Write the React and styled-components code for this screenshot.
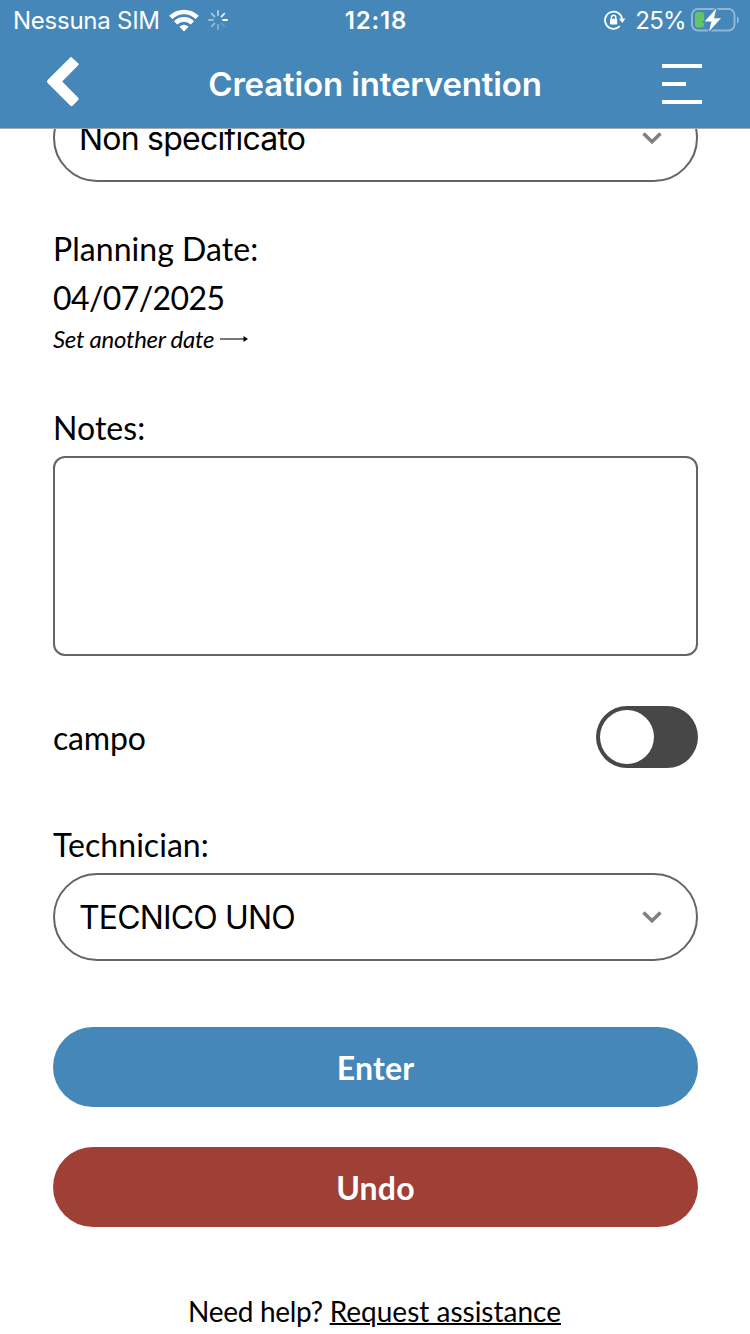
import React, { useState } from "react";
import styled, { createGlobalStyle } from "styled-components";

export default function App() {
  const [checked, setChecked] = useState(false);

  return (
    <Screen>
      <GlobalStyle />
      <StatusBar>
        <StatusLeft>
          <Carrier>Nessuna SIM</Carrier>
          <WifiIcon />
          <SpinnerIcon />
        </StatusLeft>
        <Clock>12:18</Clock>
        <StatusRight>
          <LockIcon />
          <Percent>25%</Percent>
          <BatteryIcon />
        </StatusRight>
      </StatusBar>
      <NavBar>
        <BackButton aria-label="Back">
          <svg width="34" height="52" viewBox="0 0 34 52">
            <path
              d="M25.6 1.2 L32.2 7.2 Q33.4 8.2 32.2 9.3 L16.2 25.5 L32.2 41.7 Q33.4 42.8 32.2 43.9 L26.8 49.6 Q25.6 51 24.2 49.6 L1.6 27 Q0.3 25.5 1.6 24 L24.2 1.4 Q25.2 0.6 25.6 1.2 Z"
              fill="#fff"
            />
          </svg>
        </BackButton>
        <NavTitle>Creation intervention</NavTitle>
        <MenuButton aria-label="Menu">
          <MenuLine $width={40} />
          <MenuLine $width={24} />
          <MenuLine $width={40} />
        </MenuButton>
      </NavBar>
      <Content>
        <Form>
          <SelectBox $scrolled>
            <SelectText $spacing="-0.78px">Non specificato</SelectText>
            <ChevronIcon />
          </SelectBox>
          <DateWrap>
            <Label>Planning Date:</Label>
            <DateText>04/07/2025</DateText>
            <DateLink>
              Set another date
              <ArrowIcon />
            </DateLink>
          </DateWrap>
          <Label>Notes:</Label>
          <NotesArea />
          <SwitchRow>
            <SwitchLabel>campo</SwitchLabel>
            <Switch
              role="switch"
              aria-checked={checked}
              $on={checked}
              onClick={() => setChecked(!checked)}
            >
              <Knob />
            </Switch>
          </SwitchRow>
          <Label>Technician:</Label>
          <SelectBox>
            <SelectText $spacing="-0.85px">TECNICO UNO</SelectText>
            <ChevronIcon />
          </SelectBox>
          <ButtonWrap>
            <Button $color="#4587b9">Enter</Button>
            <Button $color="#9f4037">Undo</Button>
          </ButtonWrap>
          <HelpText>
            Need help? <HelpLink href="#">Request assistance</HelpLink>
          </HelpText>
        </Form>
      </Content>
    </Screen>
  );
}

function WifiIcon() {
  return (
    <svg width="30" height="23" viewBox="0 0 30 23">
      <g fill="none" stroke="#fff" strokeWidth="4.6">
        <path d="M1.8 8.4 A18.8 18.8 0 0 1 28.2 8.4" />
        <path d="M6.6 13.8 A12 12 0 0 1 23.4 13.8" />
      </g>
      <path d="M15 22.4 L10.4 17.8 Q15 13.8 19.6 17.8 Z" fill="#fff" />
    </svg>
  );
}

function SpinnerIcon() {
  const opacities = [0.6, 0.85, 1, 0.15, 0.35, 0.4, 0.45, 0.5];
  return (
    <svg width="20" height="20" viewBox="-10 -10 20 20">
      {opacities.map((opacity, i) => (
        <path
          key={i}
          d="M0 -5 V-9"
          stroke="#fff"
          strokeWidth="1.9"
          strokeLinecap="round"
          opacity={opacity}
          transform={`rotate(${i * 45})`}
        />
      ))}
    </svg>
  );
}

function LockIcon() {
  return (
    <svg width="22" height="20" viewBox="0 0 22 20">
      <path
        d="M15.8 16.2 A8.6 8.6 0 1 1 18.1 9"
        fill="none"
        stroke="#fff"
        strokeWidth="1.8"
      />
      <path d="M15 8.6 H21.4 L18.2 13 Z" fill="#fff" />
      <rect x="6" y="8.8" width="7.2" height="5.6" rx="0.8" fill="#fff" />
      <path
        d="M7.4 9 V7.4 A2.2 2.2 0 0 1 11.8 7.4 V9"
        fill="none"
        stroke="#fff"
        strokeWidth="1.4"
      />
    </svg>
  );
}

function BatteryIcon() {
  return (
    <svg width="49" height="26" viewBox="0 0 49 26">
      <rect
        x="1"
        y="2"
        width="42.5"
        height="21.5"
        rx="6"
        fill="none"
        stroke="#8fb7d5"
        strokeWidth="2"
      />
      <path d="M46 9 Q48 10.5 48 13 Q48 15.5 46 17 Z" fill="#8fb7d5" />
      <rect x="4" y="5" width="9.2" height="15.5" rx="3" fill="#65c466" />
      <path
        d="M25.4 1.2 L13.6 14.6 H20.4 L18 24.6 L30 11.2 H23 Z"
        fill="#fff"
        stroke="#4587b9"
        strokeWidth="2.4"
        paintOrder="stroke"
      />
    </svg>
  );
}

function ChevronIcon() {
  return (
    <svg width="20" height="14" viewBox="0 0 20 14">
      <path
        d="M1.5 2.5 L10 10.8 L18.5 2.5"
        fill="none"
        stroke="#808080"
        strokeWidth="3.6"
      />
    </svg>
  );
}

function ArrowIcon() {
  return (
    <svg width="28" height="8" viewBox="0 0 28 8">
      <path d="M0 4 H24" stroke="#555" strokeWidth="1.6" />
      <path d="M23.5 1 L28 4 L23.5 7 Z" fill="#000" />
    </svg>
  );
}

const GlobalStyle = createGlobalStyle`
  * {
    box-sizing: border-box;
  }
  body {
    margin: 0;
    background: #fff;
  }
`;

const Screen = styled.div`
  display: flex;
  flex-direction: column;
  width: 750px;
  height: 1334px;
  overflow: hidden;
  background-color: #fff;
  color: #000;
  font-family: Lato, sans-serif;
`;

const StatusBar = styled.div`
  display: grid;
  grid-template-columns: 1fr auto 1fr;
  align-items: center;
  height: 40px;
  padding: 0 11px 0 13px;
  background-color: #4587b9;
  color: #fff;
  font-family: Inter, sans-serif;
  font-size: 24px;
  line-height: 38px;
`;

const StatusLeft = styled.div`
  display: flex;
  align-items: center;
  gap: 9px;
`;

const StatusRight = styled.div`
  display: flex;
  align-items: center;
  justify-content: flex-end;
  margin-right: -1px;
`;

const Carrier = styled.span`
  width: 147px;
  padding-top: 2px;
  letter-spacing: -0.25px;
  white-space: nowrap;
`;

const Clock = styled.span`
  padding-top: 2px;
  font-weight: 600;
  letter-spacing: 0.8px;
`;

const Percent = styled.span`
  margin: 0 5px 0 9px;
  padding-top: 2px;
  letter-spacing: -0.7px;
`;

const NavBar = styled.div`
  display: flex;
  align-items: center;
  justify-content: space-between;
  flex-shrink: 0;
  height: 89px;
  padding: 0 48px 0 46px;
  border-bottom: 1px solid #a9a9a9;
  background-color: #4587b9;
`;

const BackButton = styled.button`
  display: flex;
  width: 42px;
  padding: 0;
  margin-top: -4px;
  border: none;
  background: none;
  cursor: pointer;
`;

const NavTitle = styled.h1`
  margin: 0;
  color: #fff;
  font-family: Inter, sans-serif;
  font-size: 33px;
  font-weight: 600;
  letter-spacing: -0.15px;
  line-height: 40px;
`;

const MenuButton = styled.button`
  display: flex;
  flex-direction: column;
  gap: 14px;
  width: 40px;
  padding: 0;
  border: none;
  background: none;
  cursor: pointer;
`;

const MenuLine = styled.span`
  width: ${(props) => props.$width}px;
  height: 4px;
  background-color: #fff;
`;

const Content = styled.div`
  flex: 1;
  overflow: hidden;
`;

const Form = styled.div`
  display: flow-root;
  padding: 0 52px 0 53px;
`;

const Label = styled.div`
  font-size: 32px;
  letter-spacing: 0.05px;
  line-height: 40px;
`;

const SwitchLabel = styled(Label)`
  padding-top: 2px;
  letter-spacing: -0.2px;
`;

const SelectBox = styled.div`
  display: flex;
  align-items: center;
  justify-content: space-between;
  height: 88px;
  margin-top: ${(props) => (props.$scrolled ? "-35px" : "8px")};
  padding: 0 34px 0 24px;
  border: 2px solid #646464;
  border-radius: 44px;
  background-color: #fff;
`;

const SelectText = styled.span`
  font-family: Inter, sans-serif;
  font-size: 32px;
  letter-spacing: ${(props) => props.$spacing};
`;

const DateWrap = styled.div`
  margin: 47px 0 53px;
`;

const DateText = styled.div`
  margin-top: 9px;
  font-size: 32px;
  letter-spacing: -0.6px;
  line-height: 40px;
`;

const DateLink = styled.div`
  display: flex;
  align-items: center;
  gap: 6px;
  margin-top: 5px;
  font-size: 24px;
  font-style: italic;
  letter-spacing: -0.28px;
  line-height: 32px;
`;

const NotesArea = styled.textarea`
  display: block;
  width: 100%;
  height: 200px;
  margin-top: 8px;
  border: 2px solid #646464;
  border-radius: 12px;
  outline: none;
  resize: none;
`;

const SwitchRow = styled.div`
  display: flex;
  align-items: center;
  justify-content: space-between;
  margin: 50px 0 57px;
`;

const Switch = styled.button`
  display: flex;
  align-items: center;
  justify-content: ${(props) => (props.$on ? "flex-end" : "flex-start")};
  width: 102px;
  height: 62px;
  padding: 4px;
  border: none;
  border-radius: 31px;
  background-color: ${(props) => (props.$on ? "#4587b9" : "#474747")};
  cursor: pointer;
`;

const Knob = styled.span`
  width: 54px;
  height: 54px;
  border-radius: 50%;
  background-color: #fff;
`;

const ButtonWrap = styled.div`
  display: flex;
  flex-direction: column;
  gap: 40px;
  margin-top: 66px;
`;

const Button = styled.button`
  height: 80px;
  padding: 0;
  border: none;
  border-radius: 40px;
  background-color: ${(props) => props.$color};
  color: #fff;
  font-family: Lato, sans-serif;
  font-size: 32px;
  font-weight: 700;
  letter-spacing: 0.2px;
  cursor: pointer;
`;

const HelpText = styled.p`
  margin: 66px 0 0;
  padding-right: 2px;
  font-size: 28px;
  letter-spacing: -0.3px;
  line-height: 36px;
  text-align: center;
`;

const HelpLink = styled.a`
  color: #000;
  letter-spacing: 0;
  text-decoration-thickness: 2px;
`;
